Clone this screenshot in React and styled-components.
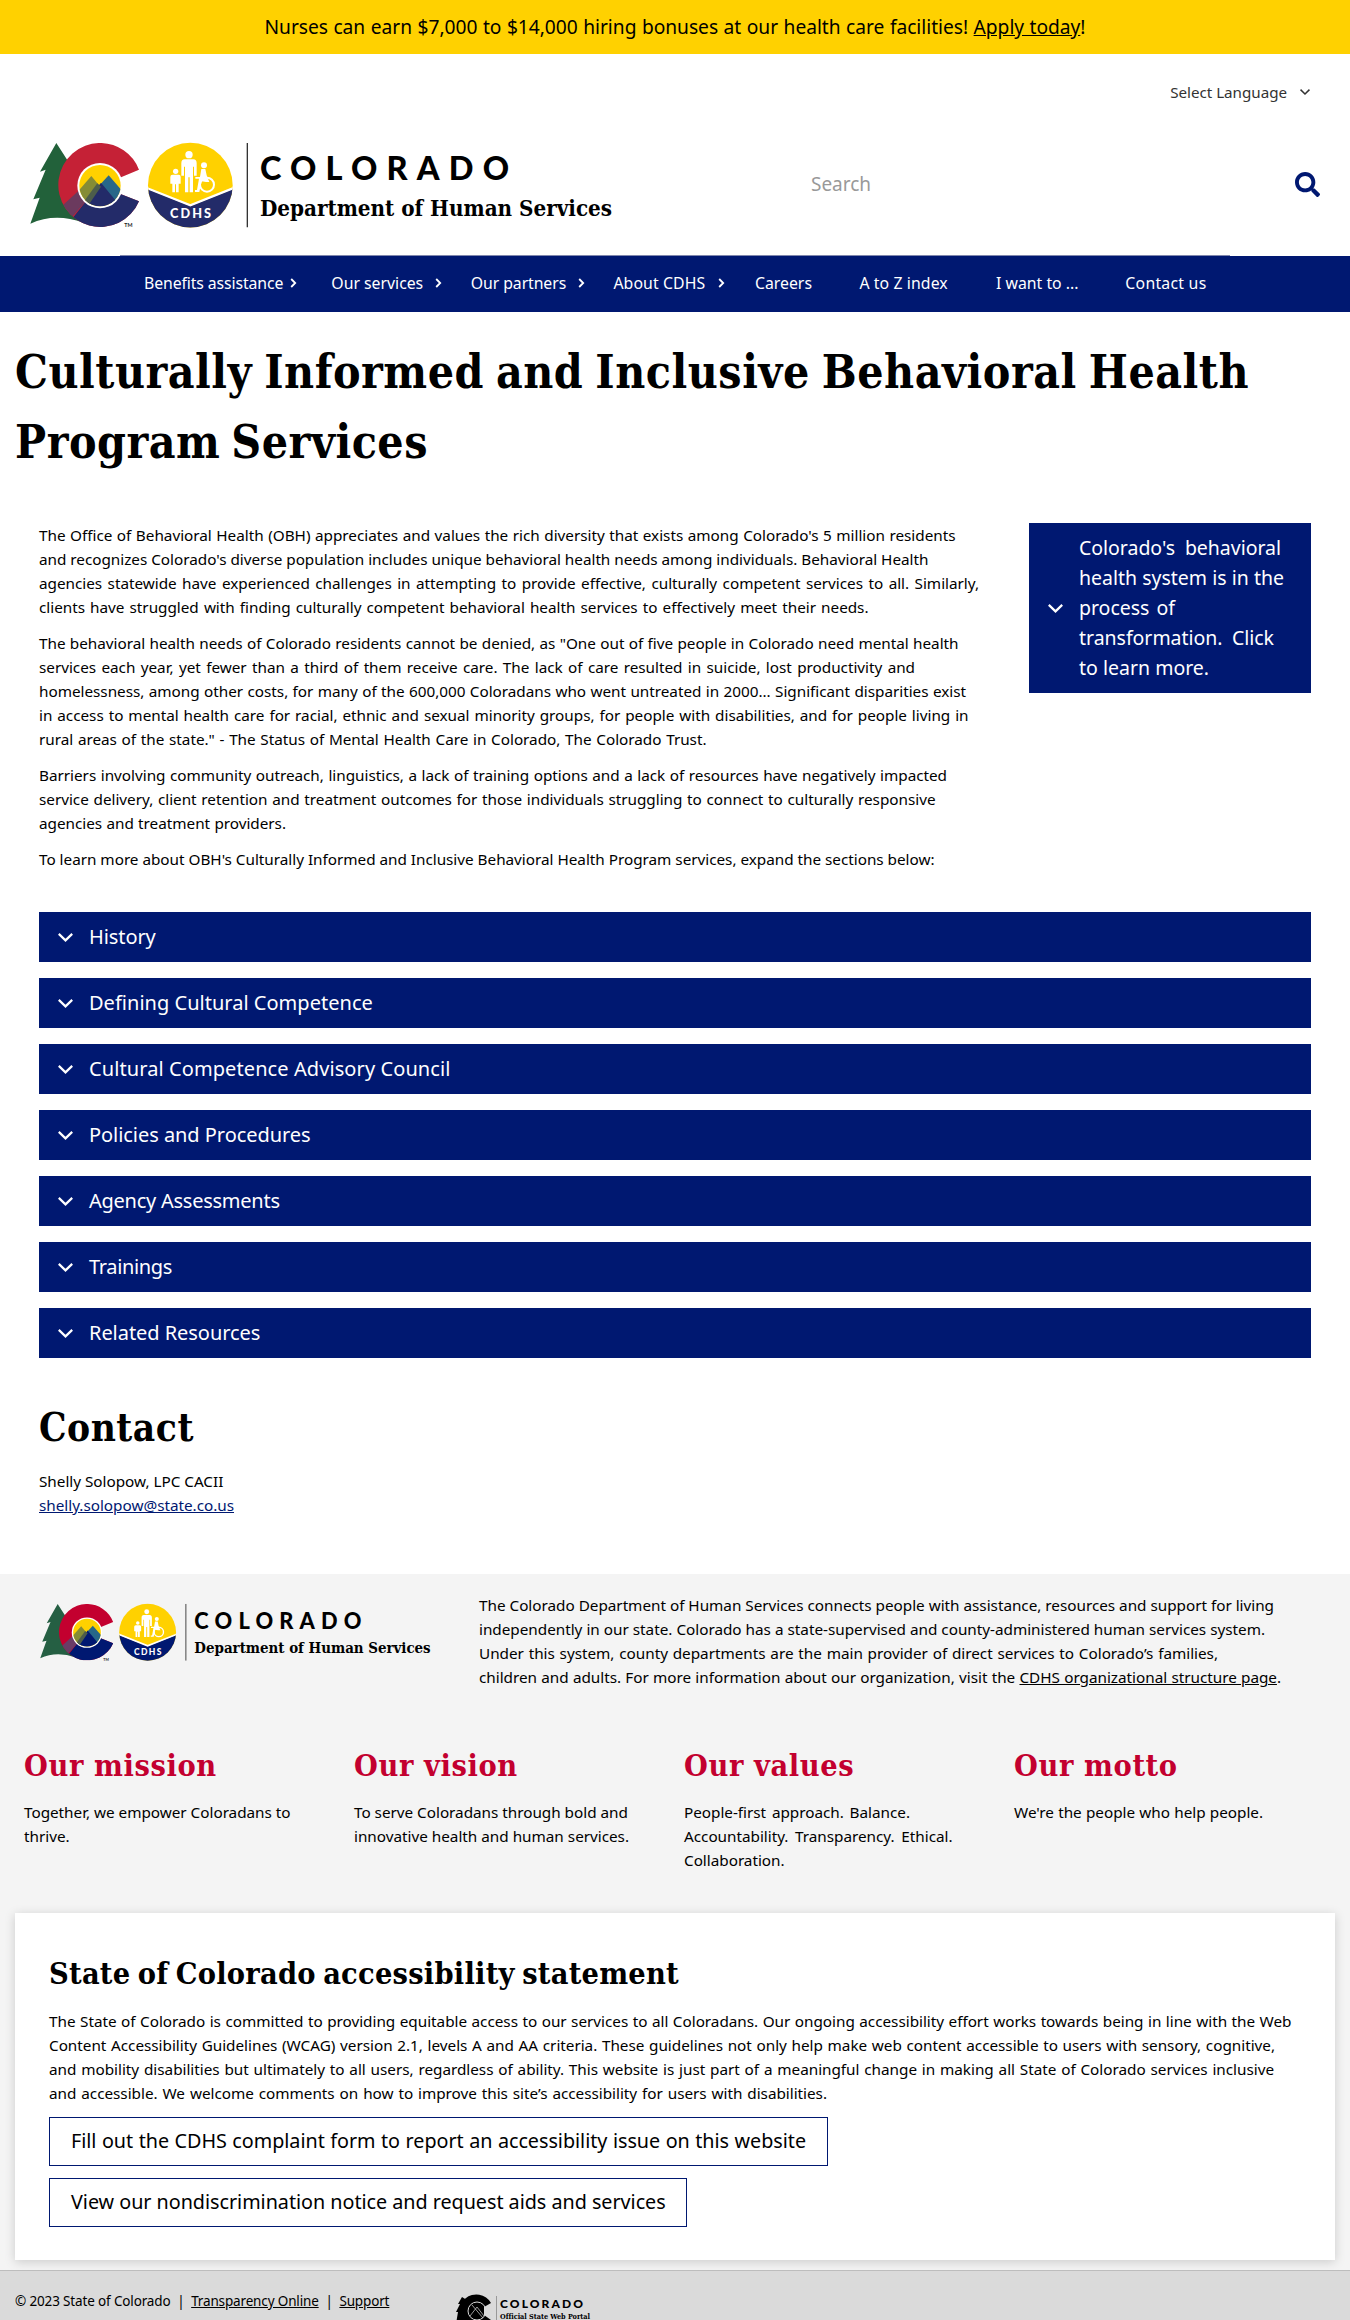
import React from "react";
import styled, { createGlobalStyle, css } from "styled-components";
import { FaSearch } from "react-icons/fa";

const sans = '"Noto Sans", "Open Sans", sans-serif';
const slab = '"DejaVu Serif Condensed", "DejaVu Serif", serif';
const navy = "#001871";

const GlobalStyle = createGlobalStyle`
  * { box-sizing: border-box; }
  body { margin: 0; background: #fff; color: #000; font-family: ${sans}; font-size: 15.3px; line-height: 24px; letter-spacing: -0.025px; }
  h1, h2, h3, p { margin: 0; }
  a { color: inherit; }
`;

const Page = styled.div`
  width: 1350px;
  height: 2320px;
  overflow: hidden;
  display: flex;
  flex-direction: column;
`;

/* One typeset line, spread to a fixed measure. */
const Line = styled.span`
  display: block;
  width: ${(p) => p.$w}px;
  white-space: nowrap;
  text-align: justify;
  text-align-last: justify;
`;

const Slab = css`
  font-family: ${slab};
  font-stretch: 75%;
  font-weight: 700;
`;

const Banner = styled.div`
  height: 54px;
  background: #ffd100;
  display: flex;
  justify-content: center;
  line-height: 53px;
  font-size: 19.2px;
`;

const UtilityRow = styled.div`
  height: 76px;
  padding-right: 40px;
  display: flex;
  align-items: center;
  justify-content: flex-end;
  gap: 13px;
  color: #333;
  font-size: 15.2px;
`;

const BrandRow = styled.header`
  height: 125px;
  padding: 13px 30px 0;
  display: flex;
  justify-content: space-between;
  align-items: flex-start;
`;

const SearchBox = styled.div`
  width: 509px;
  height: 82px;
  display: flex;
  justify-content: space-between;
  align-items: center;
  color: #999;
  font-size: 19px;
  svg { color: ${navy}; }
`;

const NavRule = styled.div`
  height: 1px;
  margin: 0 120px;
  background: #8087ad;
`;

const NavBar = styled.nav`
  height: 56px;
  padding: 0 0 2px 144px;
  background: ${navy};
  color: #fff;
  display: flex;
  align-items: center;
`;

const NavItem = styled.div`
  width: ${(p) => p.$w}px;
  display: flex;
  align-items: center;
  gap: ${(p) => p.$gap || 0}px;
  font-size: 15.8px;
  letter-spacing: ${(p) => p.$ls || 0}px;
  white-space: nowrap;
`;

const PageTitle = styled.h1`
  ${Slab}
  margin: 25px 0 0 15px;
  font-size: 46px;
  line-height: 70px;
  letter-spacing: 0.5px;
  word-spacing: -6px;
`;

const Content = styled.main`
  padding: 46px 39px 0;
`;

const Intro = styled.section`
  display: flex;
  justify-content: space-between;
  align-items: flex-start;
`;

const Copy = styled.div`
  display: flex;
  flex-direction: column;
  gap: 12px;
`;

const Callout = styled.div`
  width: 282px;
  height: 170px;
  padding-left: 19px;
  background: ${navy};
  color: #fff;
  display: flex;
  align-items: center;
  gap: 16px;
  font-size: 19.5px;
  line-height: 30px;
`;

const Accordion = styled.section`
  margin-top: 41px;
  display: flex;
  flex-direction: column;
  gap: 16px;
`;

const Panel = styled.div`
  height: 50px;
  padding-left: 19px;
  background: ${navy};
  color: #fff;
  display: flex;
  align-items: center;
  gap: 16px;
  font-size: 20px;
  letter-spacing: ${(p) => p.$ls}px;
`;

const ContactTitle = styled.h2`
  ${Slab}
  margin-top: 45px;
  font-size: 38.5px;
  line-height: 50px;
  letter-spacing: 0.5px;
`;

const ContactBody = styled.div`
  margin-top: 16px;
  height: 105px;
  a { color: ${navy}; }
`;

const Footer = styled.footer`
  background: #f4f4f4;
  height: 696px;
  padding-top: 19px;
`;

const About = styled.div`
  height: 152px;
  padding: 0 0 0 40px;
  display: flex;
  align-items: flex-start;
  svg { margin-top: 11px; }
`;

const AboutText = styled.p`
  margin-left: 49px;
`;

const Pillars = styled.div`
  height: 168px;
  padding-left: 24px;
  display: grid;
  grid-template-columns: repeat(4, 330px);
`;

const PillarTitle = styled.h3`
  ${Slab}
  margin-bottom: 15px;
  color: #c3002f;
  font-size: 30.4px;
  line-height: 40px;
  letter-spacing: 0.6px;
`;

const Statement = styled.section`
  margin: 0 15px;
  height: 347px;
  padding: 38px 34px 0;
  background: #fff;
  box-shadow: 0 2px 10px rgba(0, 0, 0, 0.17);
`;

const StatementTitle = styled.h2`
  ${Slab}
  margin-bottom: 14px;
  font-size: 30.4px;
  line-height: 44px;
  letter-spacing: 0.25px;
  word-spacing: -3px;
`;

const OutlineButton = styled.div`
  width: fit-content;
  height: 49px;
  margin-top: 12px;
  padding: 0 21px;
  border: 1px solid ${navy};
  font-size: 19.75px;
  line-height: 45px;
`;

const Legal = styled.div`
  height: 50px;
  padding: 18px 0 0 15px;
  background: #dadada;
  border-top: 1px solid #bdbdbd;
  display: flex;
  align-items: flex-start;
  font-size: 13.5px;
  svg { margin-top: 1px; }
`;

const LegalText = styled(Line)`
  margin-right: 68px;
  letter-spacing: -0.15px;
`;

const Chevron = ({ w = 15, h = 9, stroke = 2.2 }) => (
  <svg width={w} height={h} viewBox="0 0 15 9" fill="none" stroke="currentColor" strokeWidth={stroke}>
    <path d="M0.8 0.9 7.5 7.4 14.2 0.9" />
  </svg>
);

const NavChevron = () => (
  <svg width="7" height="10" viewBox="0 0 7 10" fill="none" stroke="currentColor" strokeWidth="1.8">
    <path d="M1.2 1 5.2 5 1.2 9" />
  </svg>
);

const Logo = ({ width, height, id, c }) => (
  <svg width={width} height={height} viewBox="0 0 581 84" overflow="visible">
    <defs>
      <clipPath id={`${id}-letter`}>
        <path d="M240 23A126 126 0 0 1 357 103L240 152 357 198A126 126 0 1 1 240 23Z" />
      </clipPath>
      <clipPath id={`${id}-sun`}><circle cx="240" cy="151" r="62" /></clipPath>
      <clipPath id={`${id}-seal`}><circle cx="511" cy="149.500" r="127" /></clipPath>
    </defs>
    <g transform="translate(-10 -7.700) scale(0.33333)">
      <path fill={c.green} d="M109 23 60 109 77 103 40 192 59 187 31 265Q105 232 190 262L165 110Z" />
      <g clipPath={`url(#${id}-letter)`}>
        <rect x="100" y="10" width="270" height="280" fill={c.red} />
        <path fill={c.navy} d="M147 262 245 138 300 168 370 168V290H147Z" />
        <path fill={c.plum} d="M125 213 176 166 200 195 150 252Z" />
      </g>
      <circle cx="240" cy="151" r="68" fill="#fff" />
      <g clipPath={`url(#${id}-sun)`}>
        <rect x="170" y="80" width="140" height="140" fill="#ffd100" />
        <path fill="#858c35" d="M160 184 214 122 262 180 200 220Z" />
        <path fill="#276789" d="M220 170 266 120 320 182 290 215Z" />
        <path fill={c.navy} d="M150 260 243 142 340 260Z" />
        <path fill="#4d5d4b" d="M186 206 232 144 243 154 205 210Z" />
      </g>
      <g clipPath={`url(#${id}-seal)`}>
        <rect x="380" y="20" width="262" height="262" fill="#ffd100" />
        <path fill={c.navy} d="M380 160 511 212 642 160V285H380Z" />
        <path fill="none" stroke="#fff" strokeWidth="7" d="M380 158 511 210 642 158" />
      </g>
      <g fill="#fff">
        <circle cx="507" cy="58" r="11" />
        <path d="M494 72H520Q530 72 530 84V121H522V94H519V171H509V126H505V171H495V94H492V121H484V84Q484 72 494 72Z" />
        <circle cx="467" cy="108" r="8" />
        <path d="M458 118H476Q482 118 482 125V145H476V171H468V147H465V171H457V145H451V125Q451 118 458 118Z" />
        <circle cx="552" cy="90" r="9" />
        <path d="M544 101H556L560 120 568 140H558L545 138 538 170H525V164H531L537 130 526 130V125H540Z" />
      </g>
      <circle cx="561" cy="148" r="21" fill="none" stroke="#fff" strokeWidth="6" />
      <path d="M682 23V276" stroke="#333" strokeWidth="4" />
      <text x="450" y="249" fontFamily="Lato, sans-serif" fontWeight="900" fontSize="38" fill="#fff" textLength="123">CDHS</text>
      <text x="313" y="276" fontFamily="Lato, sans-serif" fontWeight="700" fontSize="16" fill="#222">TM</text>
    </g>
    <text x="230" y="36.500" fontFamily="Lato, sans-serif" fontWeight="900" fontSize="32.500" textLength="249">COLORADO</text>
    <text x="230" y="72.500" fontFamily="DejaVu Serif Condensed, DejaVu Serif, serif" fontWeight="700" fontStretch="75%" fontSize="22" textLength="352" lengthAdjust="spacingAndGlyphs">Department of Human Services</text>
  </svg>
);

const PortalLogo = () => (
  <svg width="140" height="52" viewBox="0 0 140 52">
    <path d="M6 7 2 14 4 14 0 22 2 22 0 34H14V12Z" />
    <path d="M35 13A17 17 0 1 0 35 30L28 25V17Z" />
    <circle cx="21" cy="21" r="9" fill="none" stroke="#dadada" strokeWidth="1" />
    <path d="M14 26 21 17 28 26M16 15 27 28" fill="none" stroke="#dadada" strokeWidth="0.700" />
    <path d="M40.500 6V40" stroke="#888" strokeWidth="0.800" />
    <text x="44" y="18" fontFamily="Lato, sans-serif" fontWeight="900" fontSize="12" textLength="83">COLORADO</text>
    <text x="44" y="29" fontFamily="DejaVu Serif Condensed, DejaVu Serif, serif" fontWeight="700" fontStretch="75%" fontSize="8" textLength="90" lengthAdjust="spacingAndGlyphs">Official State Web Portal</text>
  </svg>
);

const headerColors = { green: "#22613a", red: "#c52136", navy: "#232b69", plum: "#6b3a5e" };
const footerColors = { green: "#255f43", red: "#c3002f", navy: "#001871", plum: "#6a3c66" };

const navItems = [
  { label: "Benefits assistance", w: 187.3, gap: 7, ls: -0.1, more: true },
  { label: "Our services", w: 139.5, gap: 11.5, more: true },
  { label: "Our partners", w: 142.6, gap: 12, ls: -0.08, more: true },
  { label: "About CDHS", w: 141.6, gap: 13, ls: 0.1, more: true },
  { label: "Careers", w: 104.4 },
  { label: "A to Z index", w: 136.7, ls: 0.1 },
  { label: "I want to ...", w: 129.3 },
  { label: "Contact us", w: 90, ls: 0.25 },
];

const paragraphs = [
  [
    ["The Office of Behavioral Health (OBH) appreciates and values the rich diversity that exists among Colorado's 5 million residents", 916.5],
    ["and recognizes Colorado's diverse population includes unique behavioral health needs among individuals. Behavioral Health", 886],
    ["agencies statewide have experienced challenges in attempting to provide effective, culturally competent services to all. Similarly,", 940],
    ["clients have struggled with finding culturally competent behavioral health services to effectively meet their needs.", 829.5],
  ],
  [
    ["The behavioral health needs of Colorado residents cannot be denied, as \"One out of five people in Colorado need mental health", 919.5],
    ["services each year, yet fewer than a third of them receive care. The lack of care resulted in suicide, lost productivity and", 876],
    ["homelessness, among other costs, for many of the 600,000 Coloradans who went untreated in 2000... Significant disparities exist", 927],
    ["in access to mental health care for racial, ethnic and sexual minority groups, for people with disabilities, and for people living in", 929.5],
    ["rural areas of the state.\" - The Status of Mental Health Care in Colorado, The Colorado Trust.", 667.5],
  ],
  [
    ["Barriers involving community outreach, linguistics, a lack of training options and a lack of resources have negatively impacted", 908],
    ["service delivery, client retention and treatment outcomes for those individuals struggling to connect to culturally responsive", 896.5],
    ["agencies and treatment providers.", 247],
  ],
  [["To learn more about OBH's Culturally Informed and Inclusive Behavioral Health Program services, expand the sections below:", 895.5]],
];

const sections = [
  { title: "History", ls: -0.1 },
  { title: "Defining Cultural Competence", ls: 0.02 },
  { title: "Cultural Competence Advisory Council", ls: 0.09 },
  { title: "Policies and Procedures", ls: -0.05 },
  { title: "Agency Assessments", ls: -0.25 },
  { title: "Trainings", ls: -0.35 },
  { title: "Related Resources", ls: -0.05 },
];

const pillars = [
  { title: "Our mission", lines: [["Together, we empower Coloradans to", 266.5], ["thrive.", 47]] },
  { title: "Our vision", lines: [["To serve Coloradans through bold and", 268.5], ["innovative health and human services.", 275]] },
  { title: "Our values", lines: [["People-first approach. Balance.", 226], ["Accountability. Transparency. Ethical.", 268.5], ["Collaboration.", 101]] },
  { title: "Our motto", lines: [["We're the people who help people.", 249]] },
];

const statement = [
  ["The State of Colorado is committed to providing equitable access to our services to all Coloradans. Our ongoing accessibility effort works towards being in line with the Web", 1242.5],
  ["Content Accessibility Guidelines (WCAG) version 2.1, levels A and AA criteria. These guidelines not only help make web content accessible to users with sensory, cognitive,", 1226],
  ["and mobility disabilities but ultimately to all users, regardless of ability. This website is just part of a meaningful change in making all State of Colorado services inclusive", 1225],
  ["and accessible. We welcome comments on how to improve this site’s accessibility for users with disabilities.", 778],
];

const Lines = ({ items }) => items.map(([text, w]) => <Line key={text} $w={w}>{text}</Line>);

export default function App() {
  return (
    <Page>
      <GlobalStyle />
      <Banner>
        <Line $w={821}>
          Nurses can earn $7,000 to $14,000 hiring bonuses at our health care facilities! <a href="#apply">Apply today</a>!
        </Line>
      </Banner>
      <UtilityRow>
        Select Language <Chevron w={10} h={6} stroke={2.2} />
      </UtilityRow>
      <BrandRow>
        <Logo width={581} height={84} id="header" c={headerColors} />
        <SearchBox>
          Search <FaSearch size={25} />
        </SearchBox>
      </BrandRow>
      <NavRule />
      <NavBar>
        {navItems.map((n) => (
          <NavItem key={n.label} $w={n.w} $gap={n.gap} $ls={n.ls}>
            {n.label}
            {n.more && <NavChevron />}
          </NavItem>
        ))}
      </NavBar>
      <PageTitle>
        <Line $w={1234}>Culturally Informed and Inclusive Behavioral Health</Line>
        <Line $w={413}>Program Services</Line>
      </PageTitle>
      <Content>
        <Intro>
          <Copy>
            {paragraphs.map((lines, i) => (
              <p key={i}><Lines items={lines} /></p>
            ))}
          </Copy>
          <Callout>
            <Chevron />
            <div>
              <Line $w={202}>Colorado's behavioral</Line>
              <Line $w={205}>health system is in the</Line>
              <Line $w={96}>process of</Line>
              <Line $w={195}>transformation. Click</Line>
              <Line $w={130}>to learn more.</Line>
            </div>
          </Callout>
        </Intro>
        <Accordion>
          {sections.map((s) => (
            <Panel key={s.title} $ls={s.ls}><Chevron /> {s.title}</Panel>
          ))}
        </Accordion>
        <ContactTitle>Contact</ContactTitle>
        <ContactBody>
          <Line $w={184}>Shelly Solopow, LPC CACII</Line>
          <a href="mailto:shelly.solopow@state.co.us">shelly.solopow@state.co.us</a>
        </ContactBody>
      </Content>
      <Footer>
        <About>
          <Logo width={390} height={56.4} id="footer" c={footerColors} />
          <AboutText>
            <Lines
              items={[
                ["The Colorado Department of Human Services connects people with assistance, resources and support for living", 795],
                ["independently in our state. Colorado has a state-supervised and county-administered human services system.", 786],
                ["Under this system, county departments are the main provider of direct services to Colorado’s families,", 739],
              ]}
            />
            <Line $w={802}>
              children and adults. For more information about our organization, visit the <a href="#structure">CDHS organizational structure page</a>.
            </Line>
          </AboutText>
        </About>
        <Pillars>
          {pillars.map((p) => (
            <div key={p.title}>
              <PillarTitle>{p.title}</PillarTitle>
              <Lines items={p.lines} />
            </div>
          ))}
        </Pillars>
        <Statement>
          <StatementTitle><Line $w={630}>State of Colorado accessibility statement</Line></StatementTitle>
          <p><Lines items={statement} /></p>
          <OutlineButton><Line $w={735}>Fill out the CDHS complaint form to report an accessibility issue on this website</Line></OutlineButton>
          <OutlineButton><Line $w={594}>View our nondiscrimination notice and request aids and services</Line></OutlineButton>
        </Statement>
      </Footer>
      <Legal>
        <LegalText $w={373}>
          © 2023 State of Colorado &nbsp;|&nbsp; <a href="#transparency">Transparency Online</a> &nbsp;|&nbsp; <a href="#support">Support</a>
        </LegalText>
        <PortalLogo />
      </Legal>
    </Page>
  );
}
